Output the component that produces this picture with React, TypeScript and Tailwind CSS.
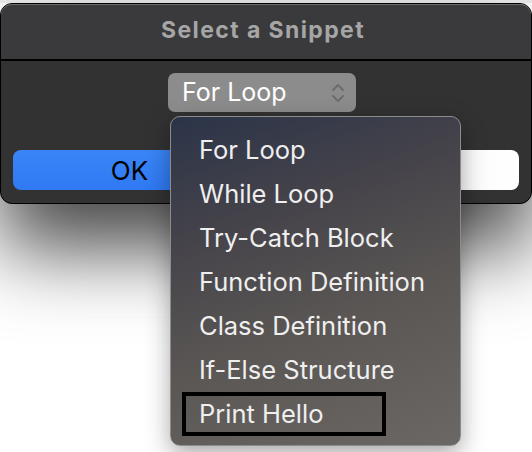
import { ChevronsUpDown } from 'lucide-react';

const snippets = [
  'For Loop',
  'While Loop',
  'Try-Catch Block',
  'Function Definition',
  'Class Definition',
  'If-Else Structure',
  'Print Hello',
];

export default function App() {
  const selected = 'Print Hello';

  return (
    <div
      className="relative w-[532px] h-[452px] overflow-hidden bg-white pt-[3px]"
      style={{ fontFamily: 'Inter, "Noto Sans", sans-serif' }}
    >
      <div className="absolute inset-x-0 top-0 h-[3px] bg-[#efefef]" />

      {/* Dialog window */}
      <div className="relative rounded-[12px] border border-black bg-[#323232] shadow-[0_45px_80px_rgba(0,0,0,0.72)]">
        <div className="flex h-[57px] items-center justify-center rounded-t-[11px] border-b-2 border-black bg-[#3a3a3c] shadow-[inset_0_1px_0_#6a6a6a]">
          <span className="-mt-[3px] -ml-[6px] text-[23px] font-bold text-[#a6a6a6] tracking-[1.4px]">Select a Snippet</span>
        </div>

        <div className="px-3 pt-3 pb-[13px]">
          <div className="pl-[155px]">
            <div className="flex h-[39px] w-[188px] items-center justify-between rounded-[7px] bg-[#8c8c8c] pl-[14px] pr-[6px]">
              <span className="text-[25px] text-white">For Loop</span>
              <ChevronsUpDown className="h-[24px] w-[24px] text-[#6c6c6c]" strokeWidth={2} />
            </div>
          </div>

          <div className="mt-[38px] flex gap-[10px]">
            <button className="flex h-[40px] w-[233px] items-center justify-center rounded-[8px] bg-[linear-gradient(180deg,#3a86f7,#2f79f3)] text-[26px] text-black">
              OK
            </button>
            <button className="flex h-[40px] flex-1 items-center justify-center rounded-[8px] bg-[linear-gradient(90deg,#ececec,#ffffff)] text-[26px] text-black">
              Cancel
            </button>
          </div>
        </div>
      </div>

      {/* Dropdown menu */}
      <div className="absolute left-[170px] top-[116px] h-[330px] w-[291px] rounded-[10px] border border-[#8c8c8c] bg-[linear-gradient(160deg,#2b3448_0%,#45434a_30%,#5a5654_60%,#6b6765_100%)] pt-[11px] shadow-[0_8px_24px_rgba(0,0,0,0.35)]">
        {snippets.map((s) => (
          <div
            key={s}
            className={`ml-[11px] flex h-[44px] items-center text-[25.5px] text-[#efefef] ${
              s === selected ? 'w-[204px] border-[4px] border-black pl-[13px]' : 'pl-[17px]'
            }`}
          >
            {s}
          </div>
        ))}
      </div>
    </div>
  );
}
